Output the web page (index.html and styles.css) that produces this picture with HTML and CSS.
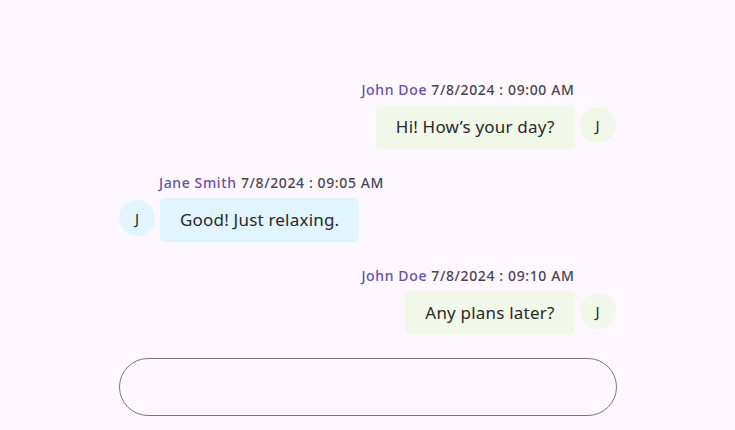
FILE: index.html
```html
<!DOCTYPE html>
<html lang="en">
<head>
<meta charset="utf-8">
<title>Chat</title>
<link rel="stylesheet" href="styles.css">
</head>
<body>
<div class="chat">
  <div class="messages">
    <div class="msg sent">
      <div class="meta"><span class="name">John Doe</span> <span class="time">7/8/2024 : 09:00 AM</span></div>
      <div class="row">
        <div class="bubble">Hi! How’s your day?</div>
        <div class="avatar">J</div>
      </div>
    </div>
    <div class="msg received">
      <div class="meta"><span class="name">Jane Smith</span> <span class="time">7/8/2024 : 09:05 AM</span></div>
      <div class="row">
        <div class="avatar">J</div>
        <div class="bubble">Good! Just relaxing.</div>
      </div>
    </div>
    <div class="msg sent">
      <div class="meta"><span class="name">John Doe</span> <span class="time">7/8/2024 : 09:10 AM</span></div>
      <div class="row">
        <div class="bubble">Any plans later?</div>
        <div class="avatar">J</div>
      </div>
    </div>
  </div>
  <div class="input"></div>
</div>
</body>
</html>
```
FILE: styles.css
```css
html, body {
  margin: 0;
  padding: 0;
  background: #fef7ff;
}
body {
  font-family: "Noto Sans", "Open Sans", sans-serif;
  color: #1d1b20;
}
.chat {
  width: 498px;
  margin: 0 auto;
  padding-top: 81px;
  display: flex;
  flex-direction: column;
}
.messages {
  display: flex;
  flex-direction: column;
  gap: 25px;
}
.msg {
  display: flex;
  flex-direction: column;
  gap: 6px;
}
.msg.sent { align-items: flex-end; padding-right: 1px; }
.msg.received { align-items: flex-start; padding-left: 0.5px; }
.meta {
  font-size: 14px;
  line-height: 18px;
  font-weight: 500;
  letter-spacing: 0.62px;
  white-space: nowrap;
}
.sent .meta { margin-right: 41px; }
.received .meta { margin-left: 40px; }
.name { color: #6750a4; }
.time { color: #49454f; }
.row {
  display: flex;
  align-items: flex-start;
  gap: 5px;
}
.bubble {
  font-size: 17px;
  line-height: 22px;
  letter-spacing: 0.2px;
  padding: 11px 20px;
  border-radius: 5px;
  white-space: nowrap;
  color: #2a272e;
}
.sent .bubble, .sent .avatar { background: #f1f8e9; }
.received .bubble, .received .avatar { background: #e1f5fe; }
.avatar {
  width: 36px;
  height: 36px;
  margin-top: 2px;
  border-radius: 50%;
  display: flex;
  align-items: center;
  justify-content: center;
  font-size: 15px;
  color: #2a272e;
}
.input {
  margin-top: 23px;
  height: 56px;
  border: 1px solid #79747e;
  border-radius: 29px;
}
```
